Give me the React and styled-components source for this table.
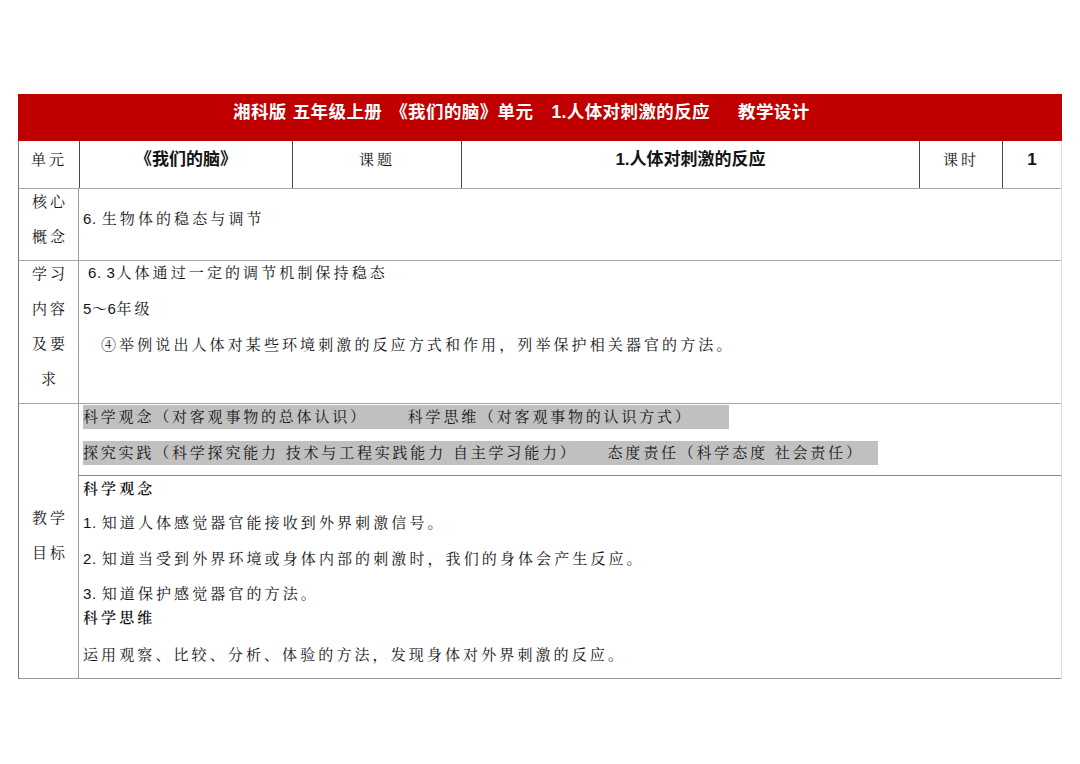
import React from 'react'
import styled, { createGlobalStyle } from 'styled-components'

const GlobalStyle = createGlobalStyle`
  html, body {
    margin: 0;
    padding: 0;
    background: #ffffff;
  }
  body {
    font-family: "Liberation Sans", "Noto Sans CJK SC", sans-serif;
    color: #141414;
  }
`

const serif = `"Liberation Sans", "Noto Serif CJK SC", "Noto Sans CJK SC", sans-serif`
const sans = `"Liberation Sans", "Noto Sans CJK SC", sans-serif`

const Page = styled.div`
  width: 1080px;
  height: 764px;
  padding: 94px 0 0 18px;
  box-sizing: border-box;
`

const Sheet = styled.div`
  width: 1044px;
`

const Banner = styled.div`
  height: 47px;
  background: #c00000;
  color: #ffffff;
  font-family: ${sans};
  font-weight: 700;
  font-size: 17.5px;
  letter-spacing: 0.4px;
  display: flex;
  align-items: flex-start;
  padding: 6px 0 0 215px;
  box-sizing: border-box;
  line-height: 24px;
`

const Seg = styled.span`
  margin-left: ${p => p.$ml || 0}px;
  white-space: nowrap;
`

const Body = styled.div`
  border-left: 1px solid #7a7a7a;
  border-right: 1px solid #dcdcdc;
`

const Row = styled.div`
  display: grid;
  grid-template-columns: ${p => p.$cols || '60px 1fr'};
  height: ${p => p.$h}px;
  box-sizing: border-box;
  border-bottom: 1px solid ${p => p.$line || '#a6a6a6'};
`

const HeadCell = styled.div`
  border-left: ${p => (p.$first ? 'none' : '1px solid #4a4a4a')};
  font-family: ${p => (p.$bold ? sans : serif)};
  font-weight: ${p => (p.$bold ? 700 : 400)};
  font-size: ${p => (p.$bold ? 17 : 15)}px;
  letter-spacing: ${p => (p.$bold ? 0 : 3)}px;
  line-height: 22px;
  padding-top: 8px;
  text-align: center;
  box-sizing: border-box;
`

const Label = styled.div`
  display: flex;
  flex-direction: column;
  align-items: center;
  gap: 11px;
  padding-top: ${p => p.$top || 1}px;
  font-family: ${serif};
  font-size: 15px;
  letter-spacing: 3px;
  line-height: 24px;
  border-right: 1px solid #9a9a9a;
  text-indent: 3px;
`

const Content = styled.div`
  display: flex;
  flex-direction: column;
  padding: ${p => p.$top || 0}px 0 0 4px;
  box-sizing: border-box;
`

const Line = styled.div`
  font-family: ${serif};
  font-weight: ${p => (p.$strong ? 600 : 400)};
  font-size: 15px;
  letter-spacing: 3.1px;
  line-height: 24px;
  margin-top: ${p => p.$mt || 0}px;
  padding-left: ${p => p.$indent || 0}px;
  white-space: nowrap;
`

const Num = styled.span`
  letter-spacing: 0.6px;
  margin-right: ${p => p.$mr || 0}px;
`

const Stack = styled.div`
  display: flex;
  flex-direction: column;
`

const Sub = styled.div`
  height: ${p => p.$h}px;
  box-sizing: border-box;
  border-bottom: ${p => (p.$divider ? '1px solid #8a8a8a' : 'none')};
  display: flex;
  flex-direction: column;
  padding: ${p => p.$top || 0}px 0 0 4px;
`

const Highlight = styled.div`
  align-self: flex-start;
  display: flex;
  gap: ${p => p.$gap}px;
  padding-right: ${p => p.$pr}px;
  margin-top: ${p => p.$mt || 0}px;
  background: #c0c0c0;
  height: 24px;
  line-height: 24px;
  font-family: ${serif};
  font-size: 15px;
  letter-spacing: 2.8px;
  white-space: nowrap;
`

export default function App() {
  return (
    <>
      <GlobalStyle />
      <Page>
        <Sheet>
          <Banner>
            <Seg>湘科版</Seg>
            <Seg $ml={6}>五年级上册</Seg>
            <Seg $ml={8}>《我们的脑》单元</Seg>
            <Seg $ml={18}>1.人体对刺激的反应</Seg>
            <Seg $ml={28}>教学设计</Seg>
          </Banner>
          <Body>
            <Row $h={48} $cols="60px 213px 169px 458px 83px 59px">
              <HeadCell $first>单元</HeadCell>
              <HeadCell $bold>《我们的脑》</HeadCell>
              <HeadCell>课题</HeadCell>
              <HeadCell $bold>1.人体对刺激的反应</HeadCell>
              <HeadCell>课时</HeadCell>
              <HeadCell $bold>1</HeadCell>
            </Row>

            <Row $h={72}>
              <Label>
                <span>核心</span>
                <span>概念</span>
              </Label>
              <Content $top={18}>
                <Line><Num $mr={5}>6.</Num>生物体的稳态与调节</Line>
              </Content>
            </Row>

            <Row $h={143}>
              <Label>
                <span>学习</span>
                <span>内容</span>
                <span>及要</span>
                <span>求</span>
              </Label>
              <Content>
                <Line $indent={5}><Num $mr={1}>6. 3</Num>人体通过一定的调节机制保持稳态</Line>
                <Line $mt={12}><Num>5～6</Num>年级</Line>
                <Line $mt={12} $indent={18}>④举例说出人体对某些环境刺激的反应方式和作用，列举保护相关器官的方法。</Line>
              </Content>
            </Row>

            <Row $h={275} $line="#9a9a9a">
              <Label $top={102}>
                <span>教学</span>
                <span>目标</span>
              </Label>
              <Stack>
                <Sub $h={72} $top={1} $divider>
                  <Highlight $gap={40} $pr={36}>
                    <span>科学观念（对客观事物的总体认识）</span>
                    <span>科学思维（对客观事物的认识方式）</span>
                  </Highlight>
                  <Highlight $gap={30} $pr={14} $mt={12}>
                    <span>探究实践（科学探究能力 技术与工程实践能力 自主学习能力）</span>
                    <span>态度责任（科学态度 社会责任）</span>
                  </Highlight>
                </Sub>
                <Sub $h={202} $top={1}>
                  <Line $strong>科学观念</Line>
                  <Line $mt={10}><Num $mr={5}>1.</Num>知道人体感觉器官能接收到外界刺激信号。</Line>
                  <Line $mt={12}><Num $mr={5}>2.</Num>知道当受到外界环境或身体内部的刺激时，我们的身体会产生反应。</Line>
                  <Line $mt={11}><Num $mr={5}>3.</Num>知道保护感觉器官的方法。</Line>
                  <Line $strong>科学思维</Line>
                  <Line $mt={13}>运用观察、比较、分析、体验的方法，发现身体对外界刺激的反应。</Line>
                </Sub>
              </Stack>
            </Row>
          </Body>
        </Sheet>
      </Page>
    </>
  )
}
